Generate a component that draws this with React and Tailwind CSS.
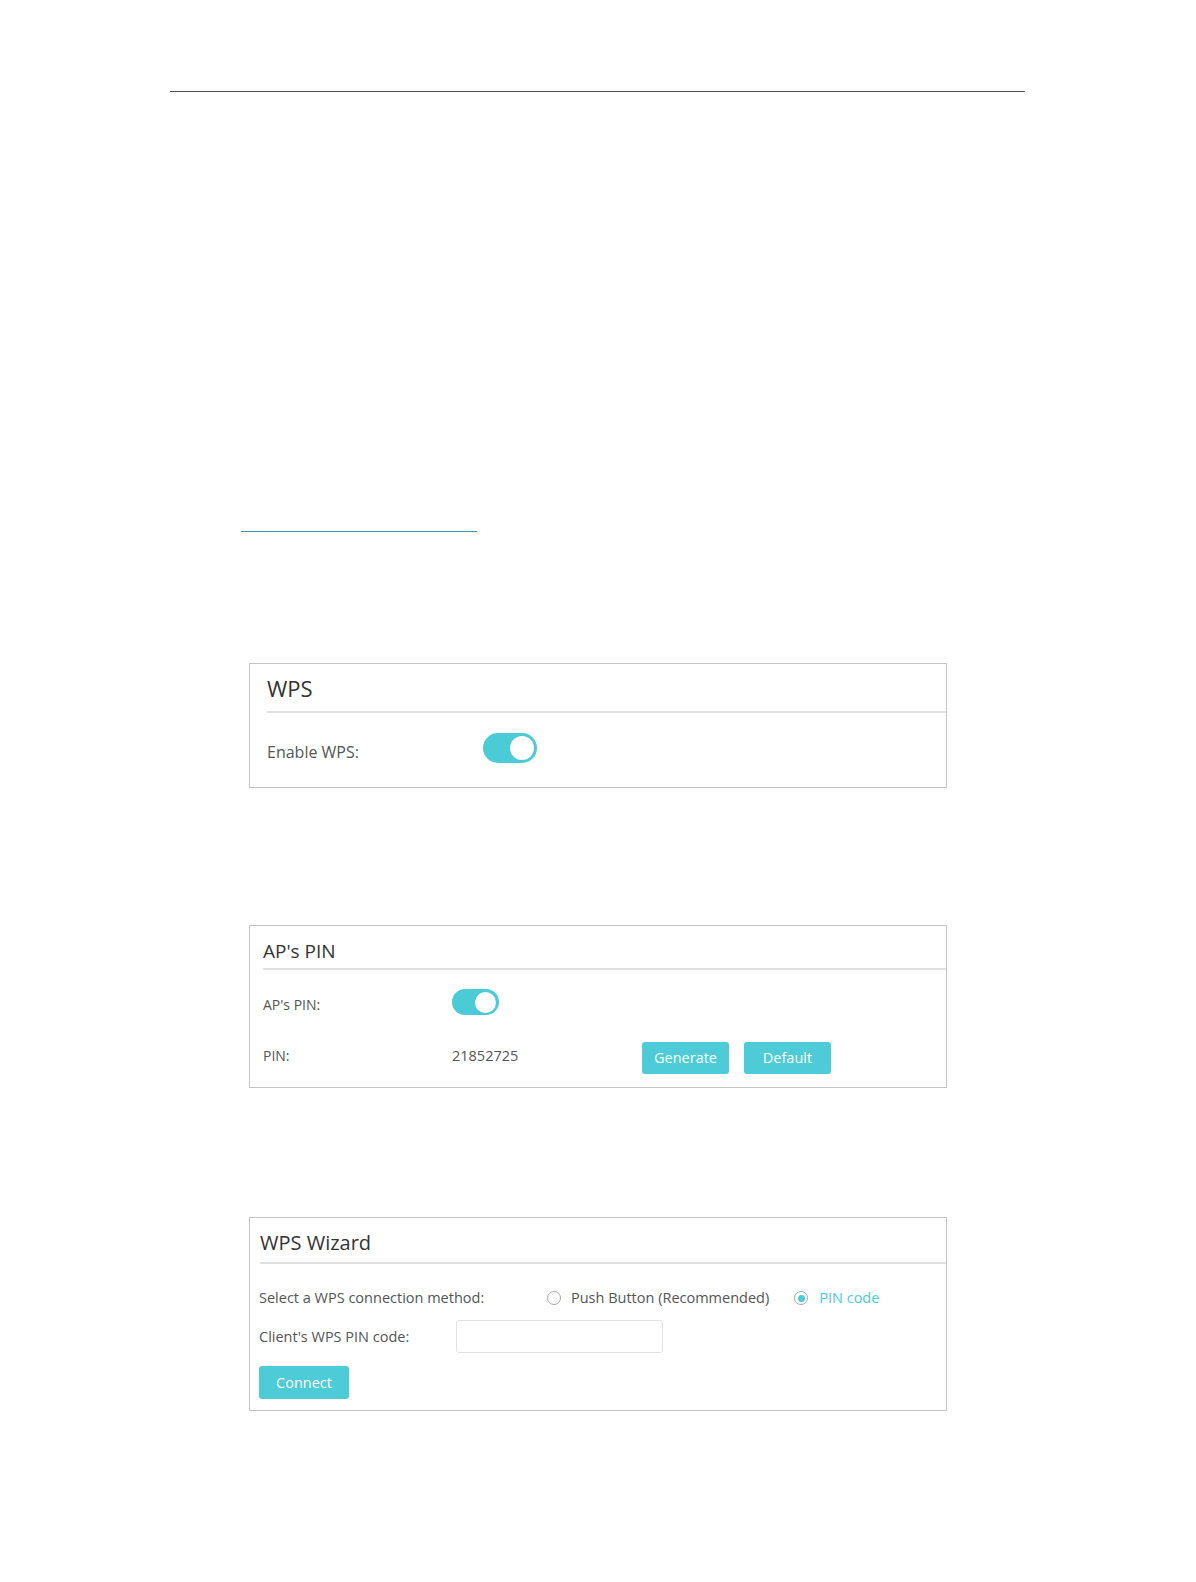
import React from "react";

// Toggle switch, always "on" in this screen
const Toggle = ({ w, h, knob }) => (
  <div
    className={`flex items-center justify-end rounded-full bg-[#4acbd6] px-[3px] ${w} ${h}`}
  >
    <div className={`rounded-full bg-white ${knob}`}></div>
  </div>
);

const Radio = ({ checked }) => (
  <div className="flex h-[14px] w-[14px] items-center justify-center rounded-full border border-[#a8a8a8] bg-white">
    {checked && <div className="h-[7px] w-[7px] rounded-full bg-[#4acbd6]"></div>}
  </div>
);

const Button = ({ children, w }) => (
  <div
    className={`flex h-[32px] items-center justify-center rounded-[3px] bg-[#4dcbd6] text-[14.5px] text-white ${w}`}
  >
    {children}
  </div>
);

const App = () => {
  return (
    <div className="min-h-[1582px] w-[1196px] bg-white pt-[91px] font-['Open_Sans',sans-serif]">
      {/* page header rule */}
      <div className="ml-[170px] h-px w-[855px] bg-[#4d4d4d]"></div>

      {/* link underline */}
      <div className="ml-[241px] mt-[439px] h-px w-[236px] bg-[#3a97a6]"></div>

      {/* WPS panel */}
      <div className="ml-[249px] mt-[131px] h-[125px] w-[698px] border border-[#c4c4c4]">
        <div className="ml-[17px] flex h-[49px] items-center border-b-2 border-[#e0e0e0]">
          <span className="text-[22px] leading-[22px] text-[#333]">WPS</span>
        </div>
        <div className="flex items-start pl-[17px]">
          <div className="mt-[29px] w-[216px] text-[16px] leading-[20px] text-[#555]">Enable WPS:</div>
          <div className="mt-[20px]">
            <Toggle w="w-[54px]" h="h-[30px]" knob="h-[24px] w-[24px]" />
          </div>
        </div>
      </div>

      {/* AP's PIN panel */}
      <div className="ml-[249px] mt-[137px] h-[163px] w-[698px] border border-[#c4c4c4]">
        <div className="ml-[13px] h-[44px] border-b-2 border-[#e0e0e0] pt-[16px]">
          <div className="text-[19px] leading-[19px] text-[#333]">AP's PIN</div>
        </div>
        <div className="flex h-[60px] items-start pl-[13px]">
          <div className="mt-[26px] w-[189px] text-[14px] leading-[18px] text-[#555]">AP's PIN:</div>
          <div className="mt-[19px]">
            <Toggle w="w-[47px]" h="h-[26px]" knob="h-[21px] w-[21px]" />
          </div>
        </div>
        <div className="flex items-start pl-[13px]">
          <div className="mt-[17px] w-[189px] text-[14px] leading-[18px] text-[#555]">PIN:</div>
          <div className="mt-[17px] w-[190px] text-[14.5px] leading-[18px] text-[#555]">21852725</div>
          <div className="mt-[12px] flex gap-[15px]">
            <Button w="w-[87px]">Generate</Button>
            <Button w="w-[87px]">Default</Button>
          </div>
        </div>
      </div>

      {/* WPS Wizard panel */}
      <div className="ml-[249px] mt-[129px] h-[194px] w-[698px] border border-[#c4c4c4]">
        <div className="ml-[10px] h-[46px] border-b-2 border-[#e0e0e0] pt-[15px]">
          <div className="text-[20px] leading-[20px] text-[#333]">WPS Wizard</div>
        </div>
        <div className="flex flex-col pl-[9px]">
          <div className="mt-[25px] flex h-[18px] items-center text-[14.5px] text-[#555]">
            <div className="w-[288px]">Select a WPS connection method:</div>
            <Radio />
            <div className="ml-[10px]">Push Button (Recommended)</div>
            <div className="ml-[25px]">
              <Radio checked />
            </div>
            <div className="ml-[11px] text-[#4acbd6]">PIN code</div>
          </div>
          <div className="mt-[13px] flex h-[33px] items-center text-[14.5px] text-[#555]">
            <div className="w-[197px]">Client's WPS PIN code:</div>
            <div className="h-[33px] w-[207px] rounded-[3px] border border-[#e3e3e3] bg-white"></div>
          </div>
          <div className="mt-[13px] flex">
            <div className="flex h-[33px] w-[90px] items-center justify-center rounded-[3px] bg-[#4dcbd6] text-[14.5px] text-white">
              Connect
            </div>
          </div>
        </div>
      </div>
    </div>
  );
};

export default App;
